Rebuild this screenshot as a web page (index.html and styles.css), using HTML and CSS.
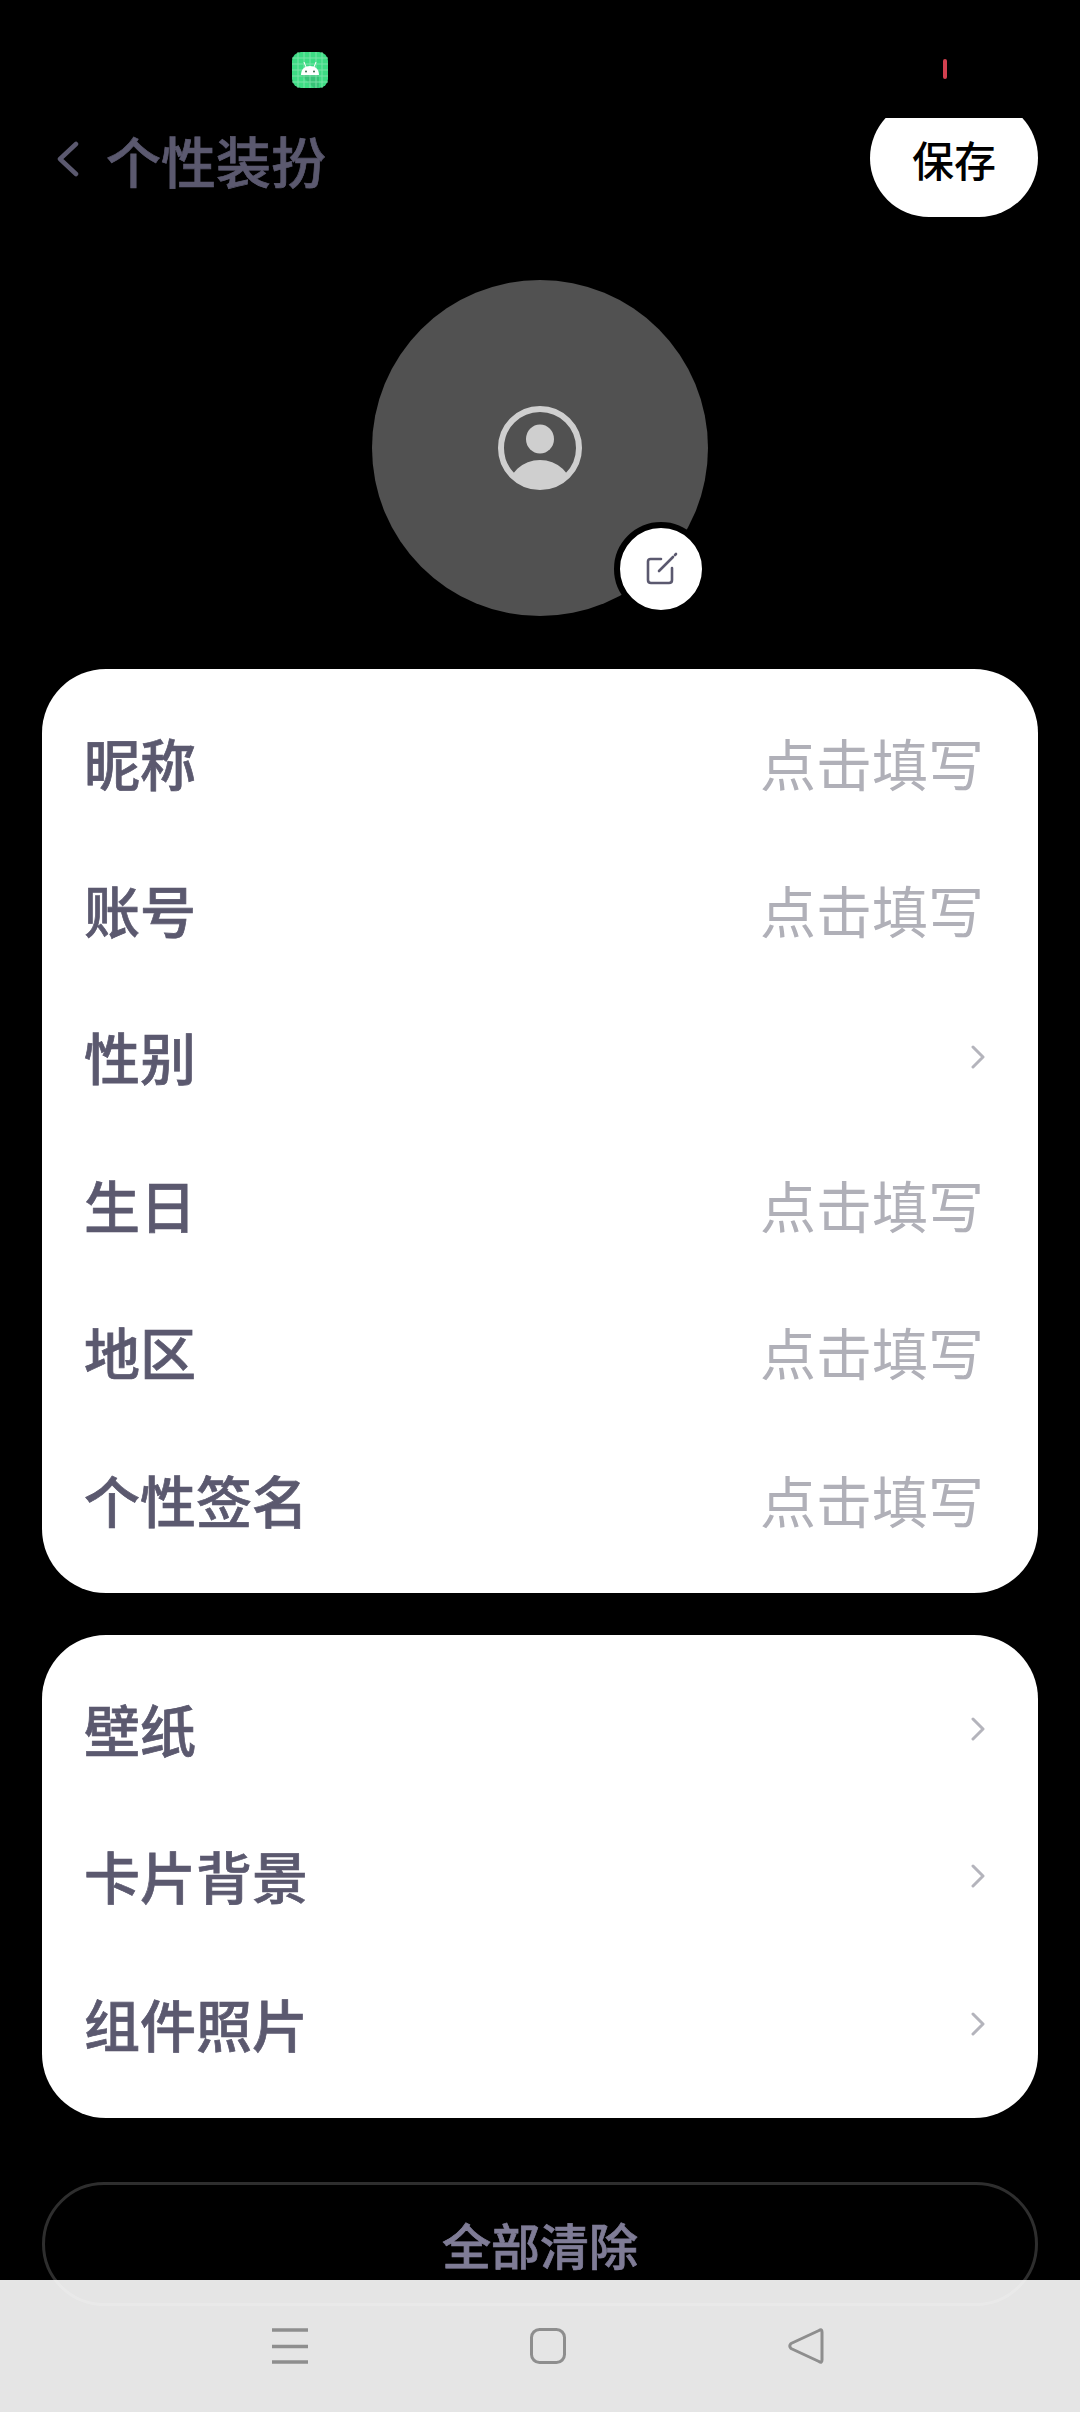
FILE: index.html
```html
<!DOCTYPE html>
<html lang="zh-CN">
<head>
    <meta charset="UTF-8">
    <meta name="viewport" content="width=device-width, initial-scale=1.0">
    <title>个性装扮</title>
    <link rel="stylesheet" href="styles.css">
</head>
<body>
    <div class="page">
        <div class="status-bar">
            <svg class="app-icon" viewBox="0 0 36 36" width="36" height="36">
                <rect width="36" height="36" rx="9" fill="#3ddc84"/>
                <path d="M9 23 L27 23 L27 36 L22 36 Z" fill="#35b874" opacity="0.7"/>
                <path d="M6 0V36M12 0V36M18 0V36M24 0V36M30 0V36M0 6H36M0 12H36M0 18H36M0 24H36M0 30H36" stroke="#8fe9b6" stroke-width="1" opacity="0.75"/>
                <path d="M12 10 L14 15 M24 10 L22 15" stroke="#fff" stroke-width="1"/>
                <path d="M9 23 C9 17 13 14 18 14 C23 14 27 17 27 23 Z" fill="#fff"/>
                <circle cx="14" cy="19.5" r="1" fill="#3a6b50"/>
                <circle cx="22" cy="19.5" r="1" fill="#3a6b50"/>
            </svg>
            <span class="record-mark"></span>
        </div>

        <div class="top-bar">
            <div class="title-wrap">
                <svg class="back-icon" viewBox="0 0 22 36" width="22" height="36">
                    <path d="M19 3 L3 18 L19 33" fill="none" stroke="#5b596f" stroke-width="4.5" stroke-linecap="round" stroke-linejoin="round"/>
                </svg>
                <h1 class="title">个性装扮</h1>
            </div>
            <button type="button" class="save-btn">保存</button>
        </div>

        <div class="avatar-wrap">
            <div class="avatar">
                <svg viewBox="0 0 84 84" width="84" height="84">
                    <defs>
                        <clipPath id="ringClip"><circle cx="42" cy="42" r="41"/></clipPath>
                    </defs>
                    <circle cx="42" cy="42" r="39" fill="none" stroke="#cfcfcf" stroke-width="6"/>
                    <ellipse cx="42" cy="33" rx="14" ry="14.5" fill="#cfcfcf"/>
                    <ellipse cx="42" cy="84" rx="32" ry="30" fill="#cfcfcf" clip-path="url(#ringClip)"/>
                </svg>
                <div class="edit-badge">
                    <svg viewBox="0 0 34 34" width="34" height="34">
                        <path d="M17 7 H6.5 Q4 7 4 9.5 V28 Q4 31 7 31 H25 Q28 31 28 28 V16" fill="none" stroke="#5b596f" stroke-width="2.6" stroke-linecap="round"/>
                        <path d="M15 19 L29 5 M31 3 L32 2" fill="none" stroke="#5b596f" stroke-width="2.6" stroke-linecap="round"/>
                    </svg>
                </div>
            </div>
        </div>

        <div class="card">
            <div class="row"><span class="row-label">昵称</span><span class="row-hint">点击填写</span></div>
            <div class="row"><span class="row-label">账号</span><span class="row-hint">点击填写</span></div>
            <div class="row">
                <span class="row-label">性别</span>
                <svg class="arrow" viewBox="0 0 14 24" width="14" height="24"><path d="M2 2 L12 12 L2 22" fill="none" stroke="#b4b4bc" stroke-width="3" stroke-linecap="round" stroke-linejoin="round"/></svg>
            </div>
            <div class="row"><span class="row-label">生日</span><span class="row-hint">点击填写</span></div>
            <div class="row"><span class="row-label">地区</span><span class="row-hint">点击填写</span></div>
            <div class="row"><span class="row-label">个性签名</span><span class="row-hint">点击填写</span></div>
        </div>

        <div class="card card-second">
            <div class="row">
                <span class="row-label">壁纸</span>
                <svg class="arrow" viewBox="0 0 14 24" width="14" height="24"><path d="M2 2 L12 12 L2 22" fill="none" stroke="#b4b4bc" stroke-width="3" stroke-linecap="round" stroke-linejoin="round"/></svg>
            </div>
            <div class="row">
                <span class="row-label">卡片背景</span>
                <svg class="arrow" viewBox="0 0 14 24" width="14" height="24"><path d="M2 2 L12 12 L2 22" fill="none" stroke="#b4b4bc" stroke-width="3" stroke-linecap="round" stroke-linejoin="round"/></svg>
            </div>
            <div class="row">
                <span class="row-label">组件照片</span>
                <svg class="arrow" viewBox="0 0 14 24" width="14" height="24"><path d="M2 2 L12 12 L2 22" fill="none" stroke="#b4b4bc" stroke-width="3" stroke-linecap="round" stroke-linejoin="round"/></svg>
            </div>
        </div>

        <button type="button" class="clear-btn"><span class="clear-text">全部清除</span></button>

        <!-- system navigation keys -->
        <div class="nav-bar">
            <svg viewBox="0 0 36 36" width="36" height="36">
                <path d="M0 2 H36 M0 18.5 H36 M0 34 H36" stroke="#8e8e8e" stroke-width="3.5"/>
            </svg>
            <svg viewBox="0 0 36 36" width="36" height="36">
                <rect x="1.5" y="1.5" width="33" height="33" rx="8" fill="none" stroke="#8e8e8e" stroke-width="3"/>
            </svg>
            <svg viewBox="0 0 36 36" width="36" height="36">
                <path d="M31 2.5 Q34 0.5 34 4 V32 Q34 35.5 31 33.5 L3 20.5 Q0.5 18 3 15.5 Z" fill="none" stroke="#8e8e8e" stroke-width="3" stroke-linejoin="round"/>
            </svg>
        </div>
    </div>
</body>
</html>
```

FILE: styles.css
```css
* {
    box-sizing: border-box;
}
body {
    margin: 0;
    background-color: #000;
    font-family: "Noto Sans CJK SC", "Noto Sans", sans-serif;
}
.page {
    position: relative;
    width: 1080px;
    height: 2412px;
    overflow: hidden;
    background-color: #000;
}
.status-bar {
    height: 118px;
    padding: 52px 133px 0 292px;
    display: flex;
    justify-content: space-between;
    align-items: flex-start;
}
.app-icon {
    display: block;
}
.record-mark {
    width: 4px;
    height: 20px;
    margin-top: 7px;
    border-radius: 2px;
    background-color: #d2404f;
}
.top-bar {
    height: 99px;
    padding: 0 42px 0 57px;
    display: flex;
    justify-content: space-between;
    align-items: flex-start;
    overflow: hidden;
}
.title-wrap {
    display: flex;
    align-items: center;
    gap: 27px;
    height: 82px;
}
.back-icon {
    display: block;
}
.title {
    margin: 0;
    font-size: 55px;
    font-weight: 500;
    line-height: 82px;
    color: #5b596f;
    -webkit-text-stroke: 0.7px #5b596f;
}
.save-btn {
    width: 168px;
    height: 118px;
    margin-top: -19px;
    padding: 0;
    border: none;
    border-radius: 59px;
    background-color: #fff;
    color: #000;
    font-family: inherit;
    font-size: 42px;
    font-weight: 500;
}
.avatar-wrap {
    padding-top: 63px;
    display: flex;
    justify-content: center;
}
.avatar {
    position: relative;
    width: 336px;
    height: 336px;
    border-radius: 50%;
    background-color: #515151;
    display: flex;
    justify-content: center;
    align-items: center;
}
.edit-badge {
    position: absolute;
    right: 0;
    bottom: 0;
    width: 94px;
    height: 94px;
    border: 6px solid #000;
    border-radius: 50%;
    background-color: #fff;
    display: flex;
    justify-content: center;
    align-items: center;
}
.card {
    margin: 53px 42px 0;
    padding: 20px 0;
    border-radius: 64px;
    background-color: #fff;
}
.card-second {
    margin-top: 42px;
}
.row {
    height: 147.4px;
    padding: 0 53px 0 42px;
    display: flex;
    justify-content: space-between;
    align-items: center;
}
.row-label {
    margin-bottom: 3px;
    font-size: 56px;
    font-weight: 500;
    color: #5b596f;
    -webkit-text-stroke: 0.7px #5b596f;
}
.row-hint {
    margin: 0 1px 3px 0;
    font-size: 56px;
    font-weight: 400;
    color: #b0b0b8;
}
.arrow {
    display: block;
}
.clear-btn {
    position: relative;
    z-index: 2;
    display: block;
    width: 996px;
    height: 124px;
    margin: 64px 42px 0;
    padding: 0;
    border: 3px solid rgba(255, 255, 255, 0.18);
    border-radius: 62px;
    background: transparent;
    font-family: inherit;
}
.clear-text {
    font-size: 49px;
    font-weight: 500;
    color: #7f7c96;
    -webkit-text-stroke: 0.7px #7f7c96;
}
.nav-bar {
    position: absolute;
    left: 0;
    right: 0;
    bottom: 0;
    height: 132px;
    padding-left: 16px;
    background-color: #e5e5e5;
    display: flex;
    justify-content: center;
    align-items: center;
    gap: 222px;
}
```
